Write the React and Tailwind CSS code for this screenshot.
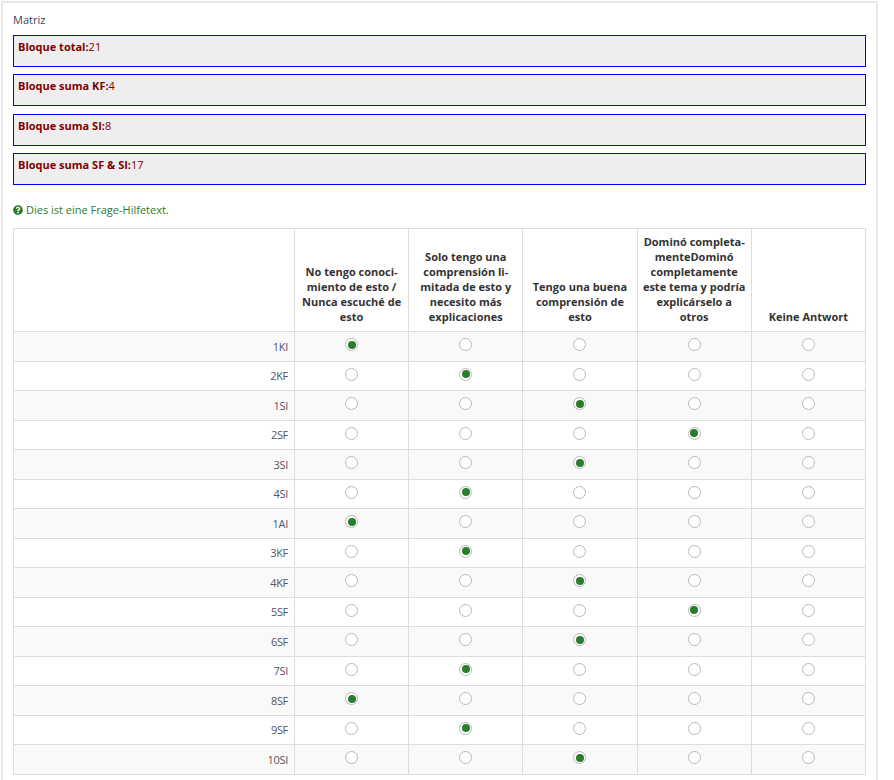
import React from 'react';
import { FaQuestionCircle } from 'react-icons/fa';

const sums = [
  { label: 'Bloque total:', value: 21 },
  { label: 'Bloque suma KF:', value: 4 },
  { label: 'Bloque suma SI:', value: 8 },
  { label: 'Bloque suma SF & SI:', value: 17 },
];

// header labels, broken the way the survey renders them
const answers = [
  ['No tengo conoci-', 'miento de esto /', 'Nunca escuché de', 'esto'],
  ['Solo tengo una', 'comprensión li-', 'mitada de esto y', 'necesito más', 'explicaciones'],
  ['Tengo una buena', 'comprensión de', 'esto'],
  ['Dominó completa-', 'menteDominó', 'completamente', 'este tema y podría', 'explicárselo a', 'otros'],
  ['Keine Antwort'],
];

const rows = [
  ['1KI', 0], ['2KF', 1], ['1SI', 2], ['2SF', 3], ['3SI', 2],
  ['4SI', 1], ['1AI', 0], ['3KF', 1], ['4KF', 2], ['5SF', 3],
  ['6SF', 2], ['7SI', 1], ['8SF', 0], ['9SF', 1], ['10SI', 2],
];

function Radio({ checked }) {
  return (
    <span className="inline-flex items-center justify-center w-[13px] h-[13px] rounded-full border border-[#b9b9b9] bg-white align-middle">
      {checked && <span className="block w-[8px] h-[8px] rounded-full bg-[#2a7d2e]" />}
    </span>
  );
}

export default function App() {
  return (
    <div className="min-h-[780px] bg-white pl-[1px] pt-[1px] font-['Open_Sans',sans-serif] text-[11px]">
      <div className="w-[877px] min-h-[800px] border-2 border-[#e8e8e8] px-[10px] pt-[9px]">
        <div className="text-[#3f3f55] leading-[16px] h-[23px]">Matriz</div>

        <div className="flex flex-col gap-[7.4px]">
          {sums.map((s) => (
            <div key={s.label} className="h-[32px] border border-[#0000ff] bg-[#eeeeee] px-[4px] pt-[3px] leading-[16px] text-[#800000]">
              <span className="font-bold">{s.label}</span>
              {s.value}
            </div>
          ))}
        </div>

        <div className="mt-[17px] flex items-center gap-[3px] text-[#2f7a2a] leading-[16px]">
          <FaQuestionCircle className="w-[10px] h-[10px]" />
          <span>Dies ist eine Frage-Hilfetext.</span>
        </div>

        <table className="mt-[10px] w-[853px] table-fixed border-collapse">
          <colgroup>
            <col className="w-[281px]" />
            {answers.map((_, i) => <col key={i} />)}
          </colgroup>
          <thead>
            <tr className="h-[103px]">
              <th className="border border-[#dddddd]" />
              {answers.map((lines, i) => (
                <th key={i} className="border border-[#dddddd] align-bottom text-center font-bold text-[#333333] leading-[15px] px-[4px] pb-[7px]">
                  {lines.map((l) => (
                    <div key={l} className="whitespace-nowrap">{l}</div>
                  ))}
                </th>
              ))}
            </tr>
          </thead>
          <tbody>
            {rows.map(([code, pick], r) => (
              <tr key={code} className={r % 2 === 0 ? 'h-[29.5px] bg-[#f9f9f9]' : 'h-[29.5px] bg-white'}>
                <td className="border border-[#dddddd] text-right pr-[6px] pt-[1px] text-[#555566] tracking-[-0.3px] leading-[16px]">{code}</td>
                {answers.map((_, c) => (
                  <td key={c} className="border border-[#dddddd] text-center leading-[0] pb-[3px]">
                    <Radio checked={c === pick} />
                  </td>
                ))}
              </tr>
            ))}
          </tbody>
        </table>
      </div>
    </div>
  );
}
